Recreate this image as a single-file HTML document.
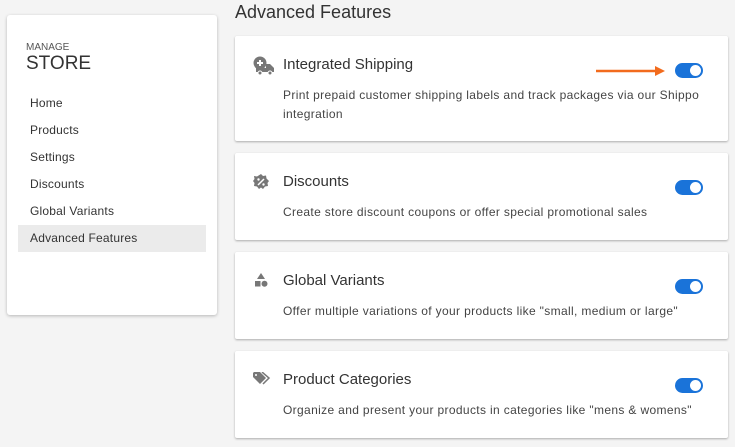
<!DOCTYPE html>
<html><head><style>
*{box-sizing:border-box;margin:0;padding:0}
body{width:735px;height:447px;background:#f4f4f4;font-family:"Liberation Sans",sans-serif;color:#444;position:relative;overflow:hidden}
.side{position:absolute;left:7px;top:15px;width:210px;height:300px;background:#fff;border-radius:3px;box-shadow:0 1px 3px rgba(0,0,0,.25)}
.mg{position:absolute;left:19px;top:27px;font-size:10px;color:#555}
.st{position:absolute;left:19px;top:38px;font-size:19px;color:#333}
.nav{position:absolute;left:11px;width:188px;height:27px;line-height:27px;padding-left:12px;font-size:12px;color:#333;letter-spacing:.2px}
.nav.a{background:#ebebeb}
h1{position:absolute;left:235px;top:2px;font-size:18px;font-weight:normal;color:#333}
.card{position:absolute;left:235px;width:493px;background:#fff;border-radius:2px;box-shadow:0 1px 2px rgba(0,0,0,.3)}
.t{position:absolute;left:48px;font-size:15px;color:#333}
.d{position:absolute;left:48px;font-size:12px;letter-spacing:.35px;color:#444;line-height:19px;width:425px}
.ic{position:absolute;left:18px}
.tg{position:absolute;left:440px;width:28px;height:15px;border-radius:8px;background:#1a73d9}
.tg:after{content:"";position:absolute;right:2px;top:2px;width:11px;height:11px;border-radius:50%;background:#fff}
</style></head><body>
<div class="side">
<div class="mg">MANAGE</div><div class="st">STORE</div>
<div class="nav" style="top:75px">Home</div>
<div class="nav" style="top:102px">Products</div>
<div class="nav" style="top:129px">Settings</div>
<div class="nav" style="top:156px">Discounts</div>
<div class="nav" style="top:183px">Global Variants</div>
<div class="nav a" style="top:210px">Advanced Features</div>
</div>
<h1>Advanced Features</h1>
<div class="card" style="top:36px;height:105px">
<svg class="ic" style="top:20px" width="22" height="20" viewBox="0 0 22 20"><circle cx="7" cy="7" r="6.5" fill="#777"/><path d="M7 4v6M4 7h6" stroke="#fff" stroke-width="2"/><path d="M3 12h10v-4h4l4 4v4H3z" fill="#777"/><circle cx="7" cy="17" r="2" fill="#777" stroke="#fff"/><circle cx="17" cy="17" r="2" fill="#777" stroke="#fff"/></svg>
<div class="t" style="top:20px">Integrated Shipping</div>
<div class="d" style="top:50px">Print prepaid customer shipping labels and track packages via our Shippo integration</div>
<svg style="position:absolute;left:360px;top:29px" width="72" height="12"><path d="M1 6H62" stroke="#f26b1d" stroke-width="2.5"/><path d="M60 1L70 6L60 11z" fill="#f26b1d"/></svg>
<div class="tg" style="top:27px"></div>
</div>
<div class="card" style="top:153px;height:87px">
<svg class="ic" style="top:21px" width="16" height="16" viewBox="0 0 16 16"><path d="M8 0l2 2 3-.5.5 3L16 7l-1.5 2 .5 3-3 .5L10 15l-2-1.5L6 15l-2-2.5-3-.5.5-3L0 7l1.5-2L1 2l3 .5z" fill="#777"/><path d="M5 11l6-6" stroke="#fff" stroke-width="1.5"/><circle cx="5.5" cy="5.5" r="1.2" fill="#fff"/><circle cx="10.5" cy="10.5" r="1.2" fill="#fff"/></svg>
<div class="t" style="top:20px">Discounts</div>
<div class="d" style="top:50px">Create store discount coupons or offer special promotional sales</div>
<div class="tg" style="top:27px"></div>
</div>
<div class="card" style="top:252px;height:87px">
<svg class="ic" style="top:20px" width="16" height="16" viewBox="0 0 16 16"><path d="M8 1l4 6H4z" fill="#777"/><rect x="2" y="9" width="5.5" height="5.5" fill="#777"/><circle cx="11.5" cy="11.7" r="3" fill="#777"/></svg>
<div class="t" style="top:20px">Global Variants</div>
<div class="d" style="top:50px">Offer multiple variations of your products like "small, medium or large"</div>
<div class="tg" style="top:27px"></div>
</div>
<div class="card" style="top:351px;height:87px">
<svg class="ic" style="top:21px" width="18" height="14" viewBox="0 0 18 14"><path d="M0 1v4l7 7 6-6-6-6H1z" fill="#777"/><circle cx="3" cy="3" r="1" fill="#fff"/><path d="M9 0l7 6-6 6" stroke="#777" stroke-width="1.5" fill="none"/></svg>
<div class="t" style="top:20px">Product Categories</div>
<div class="d" style="top:50px">Organize and present your products in categories like "mens &amp; womens"</div>
<div class="tg" style="top:27px"></div>
</div>
</body></html>
